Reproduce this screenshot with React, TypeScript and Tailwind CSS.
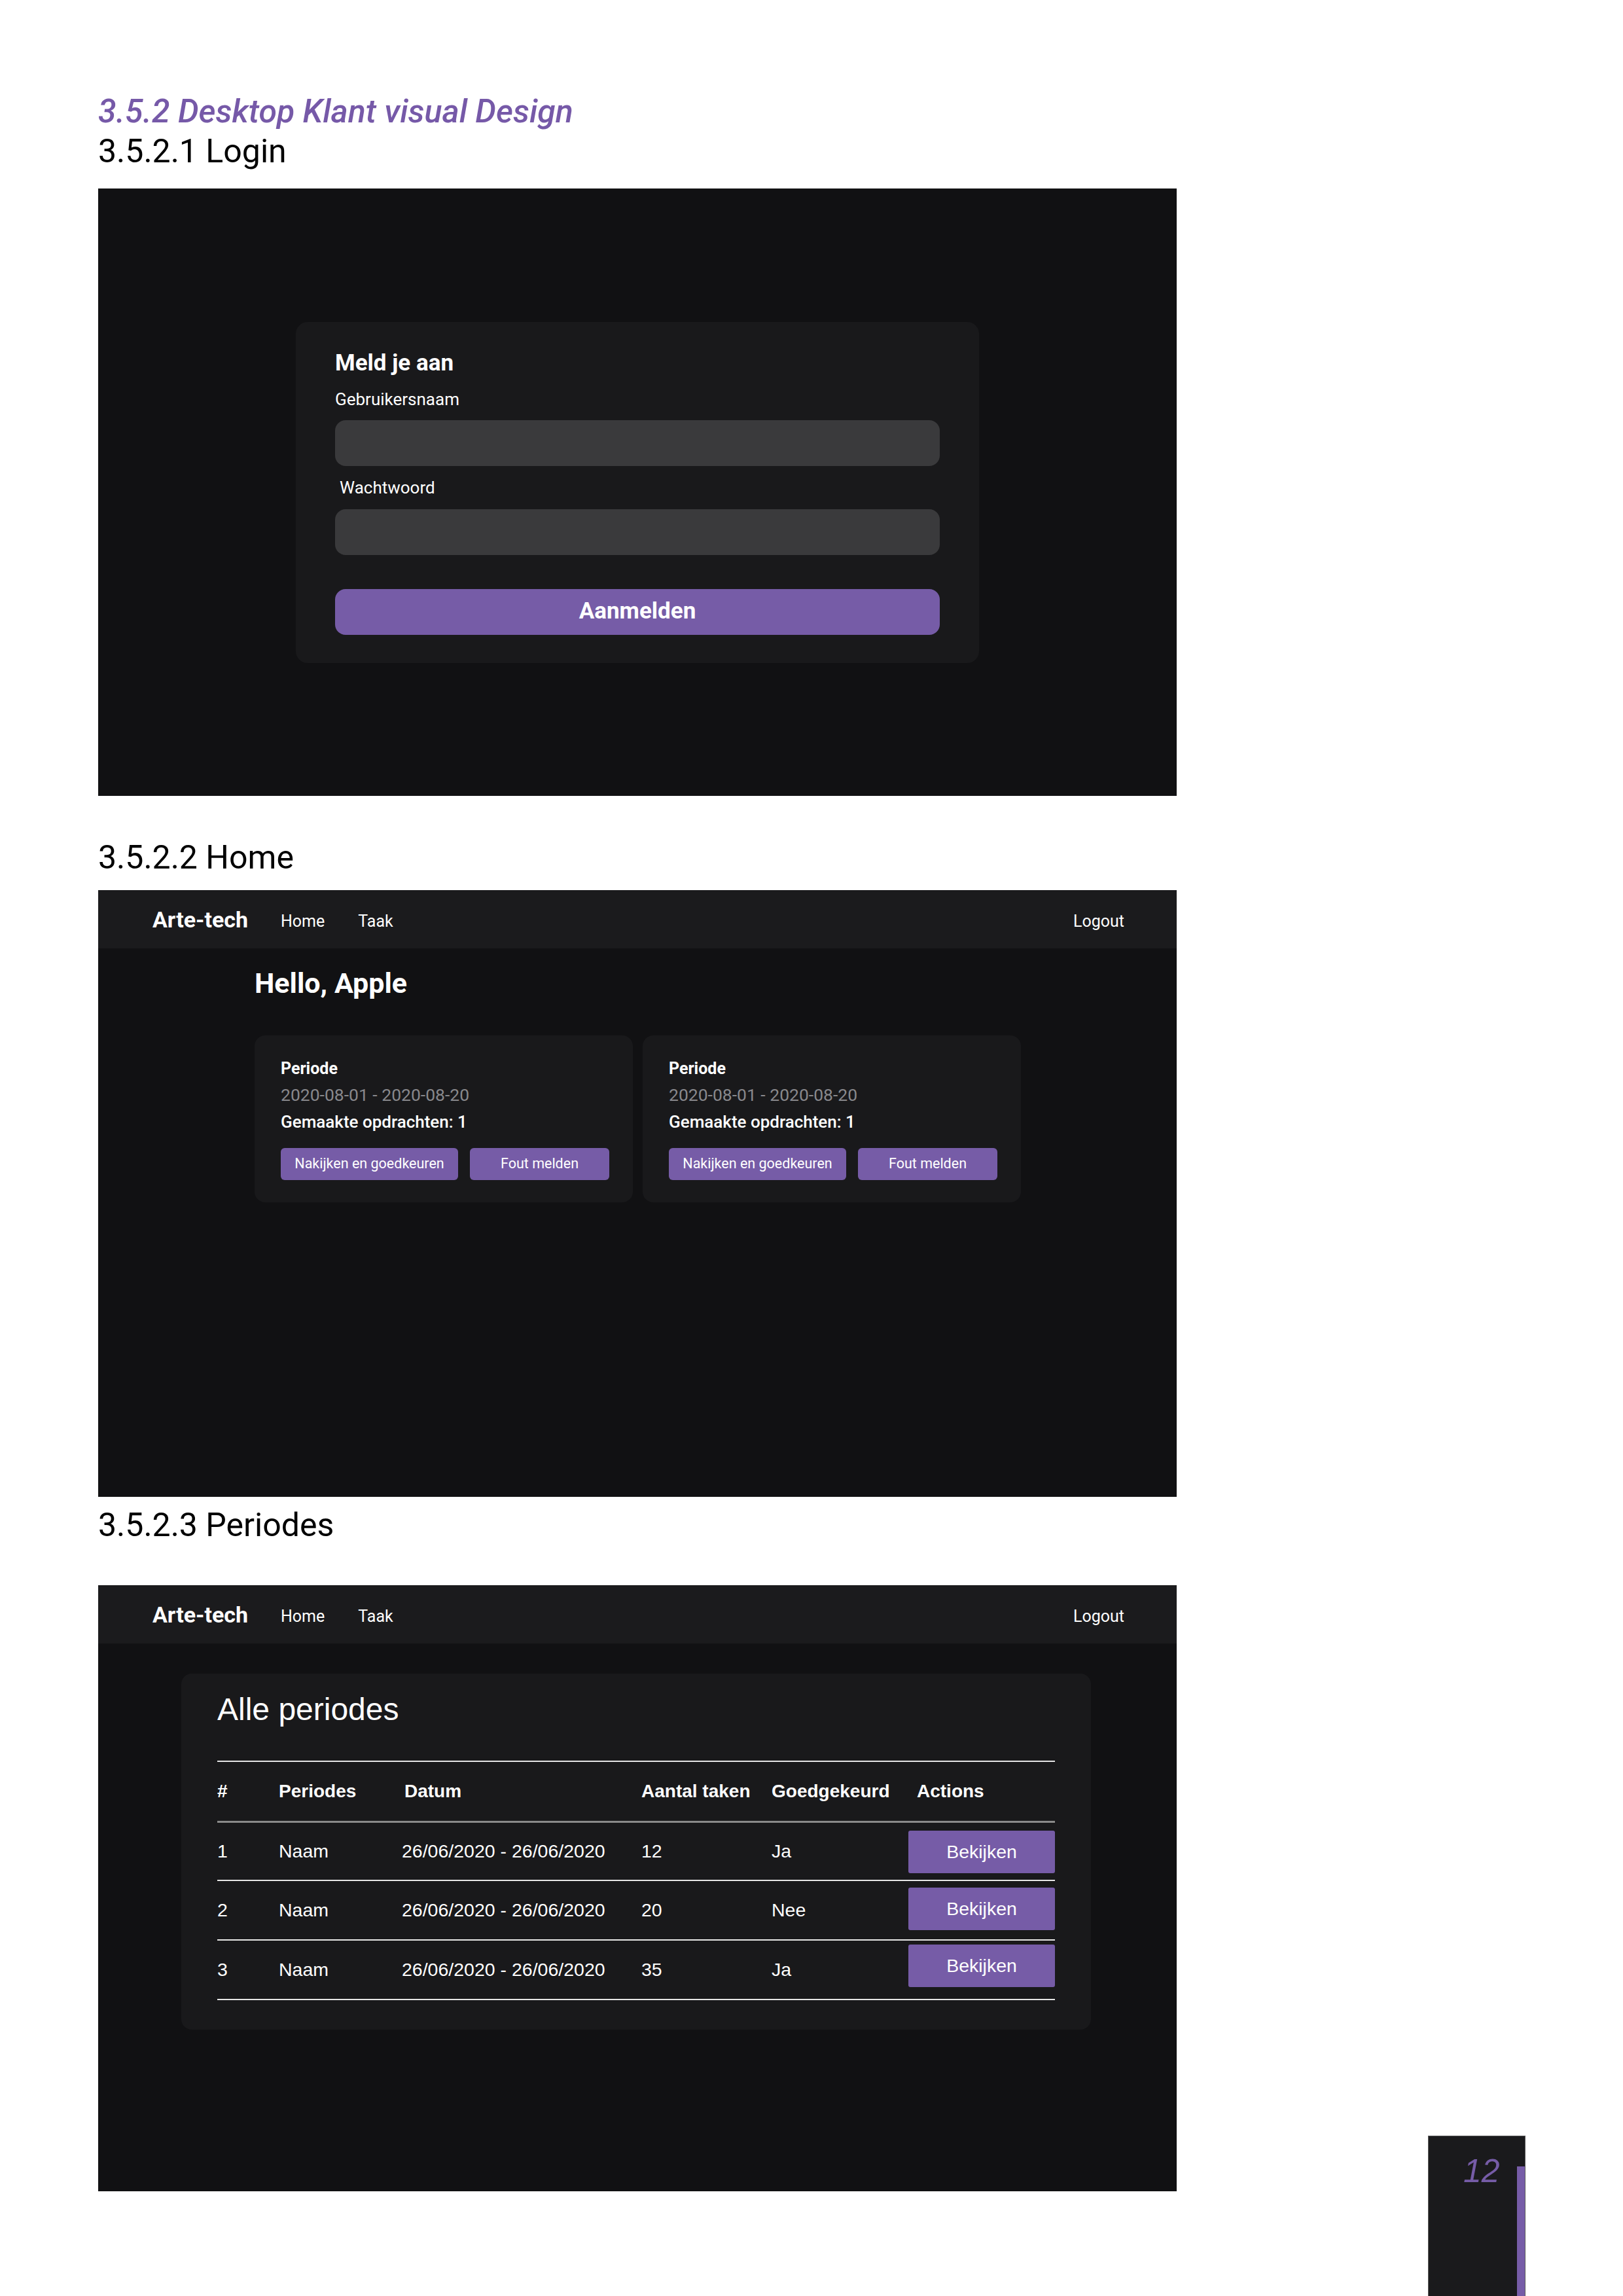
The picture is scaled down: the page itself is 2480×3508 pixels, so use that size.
import React from "react";

const PURPLE = "bg-[#765ca7]";

function NavBar() {
  return (
    <div className="h-[89px] bg-[#1b1b1d] flex items-center pl-[83px] pr-[80px] text-white">
      <span className="text-[34px] font-bold leading-none">Arte-tech</span>
      <span className="ml-[50px] text-[25px] leading-none mt-[5px]">Home</span>
      <span className="ml-[51px] text-[25px] leading-none mt-[5px]">Taak</span>
      <span className="ml-auto text-[25px] leading-none mt-[5px]">Logout</span>
    </div>
  );
}

function LoginFrame() {
  return (
    <div className="h-[928px] w-[1648px] bg-[#111113] flex items-center justify-center">
      <div className="w-[1044px] rounded-[18px] bg-[#19191b] px-[60px] pt-[45px] pb-[43px] flex flex-col text-white">
        <div className="text-[35px] font-bold leading-none">Meld je aan</div>
        <div className="mt-[25px] text-[26px] leading-none">Gebruikersnaam</div>
        <div className="mt-[19px] h-[70px] rounded-[16px] bg-[#3a3a3c]" />
        <div className="mt-[20px] text-[26px] leading-none pl-[7px]">Wachtwoord</div>
        <div className="mt-[20px] h-[70px] rounded-[16px] bg-[#3a3a3c]" />
        <div className={`mt-[52px] h-[70px] rounded-[16px] ${PURPLE} flex items-center justify-center text-[35px] font-bold`}>
          Aanmelden
        </div>
      </div>
    </div>
  );
}

function PeriodCard() {
  return (
    <div className="w-[578px] h-[255px] rounded-[16px] bg-[#19191b] pl-[40px] pt-[38px] text-white">
      <div className="text-[25px] font-bold leading-none">Periode</div>
      <div className="mt-[15px] text-[26.5px] leading-none text-[#88888c]">2020-08-01 - 2020-08-20</div>
      <div className="mt-[14px] text-[26px] font-medium leading-none">Gemaakte opdrachten: 1</div>
      <div className="mt-[27px] flex gap-[18px]">
        <div className={`w-[271px] h-[49px] rounded-[6px] ${PURPLE} flex items-center justify-center text-[21.5px]`}>
          Nakijken en goedkeuren
        </div>
        <div className={`w-[213px] h-[49px] rounded-[6px] ${PURPLE} flex items-center justify-center text-[21.5px]`}>
          Fout melden
        </div>
      </div>
    </div>
  );
}

function HomeFrame() {
  return (
    <div className="h-[927px] w-[1648px] bg-[#111113] flex flex-col">
      <NavBar />
      <div className="pl-[239px] pt-[32px] flex flex-col">
        <div className="text-white text-[43px] font-bold leading-none">Hello, Apple</div>
        <div className="mt-[58px] flex gap-[15px]">
          <PeriodCard />
          <PeriodCard />
        </div>
      </div>
    </div>
  );
}

const rows = [
  { n: "1", naam: "Naam", datum: "26/06/2020 - 26/06/2020", taken: "12", ok: "Ja", h: "h-[87px]", b: "mt-[12px]" },
  { n: "2", naam: "Naam", datum: "26/06/2020 - 26/06/2020", taken: "20", ok: "Nee", h: "h-[89px]", b: "mt-[10px]" },
  { n: "3", naam: "Naam", datum: "26/06/2020 - 26/06/2020", taken: "35", ok: "Ja", h: "h-[89px]", b: "mt-[6px]" },
];

const COLS = "grid grid-cols-[94px_192px_362px_199px_209px_224px] items-center";

function PeriodesFrame() {
  return (
    <div className="h-[926px] w-[1648px] bg-[#111113] flex flex-col">
      <NavBar />
      <div className="pt-[46px] flex justify-center pr-[4px]">
        <div className="w-[1390px] rounded-[16px] bg-[#19191b] px-[55px] pt-[31px] pb-[45px] text-white font-['Liberation_Sans',Arial,sans-serif]">
          <div className="text-[48px] leading-none">Alle periodes</div>
          <div className="mt-[54px] h-[2px] bg-[#e6e6e6]" />
          <div className={`${COLS} h-[90px] text-[28px] font-bold leading-none`}>
            <span>#</span>
            <span>Periodes</span>
            <span>Datum</span>
            <span>Aantal taken</span>
            <span>Goedgekeurd</span>
            <span className="pl-[13px]">Actions</span>
          </div>
          <div className="h-[3px] bg-[#8a8a8a]" />
          {rows.map((r) => (
            <React.Fragment key={r.n}>
              <div className={`${COLS} ${r.h} text-[28.5px] leading-none`}>
                <span>{r.n}</span>
                <span>{r.naam}</span>
                <span className="-ml-[4px]">{r.datum}</span>
                <span>{r.taken}</span>
                <span>{r.ok}</span>
                <div className={`self-start ${r.b} h-[65px] rounded-[3px] ${PURPLE} flex items-center justify-center`}>Bekijken</div>
              </div>
              <div className="h-[2px] bg-[#e6e6e6]" />
            </React.Fragment>
          ))}
        </div>
      </div>
    </div>
  );
}

export default function App() {
  return (
    <div className="relative w-[2480px] h-[3508px] bg-white overflow-hidden font-[Roboto,sans-serif]">
      <div className="pl-[150px] pt-[145px] flex flex-col items-start">
        <h1 className="text-[50px] leading-none italic font-medium text-[#7659a8]">3.5.2 Desktop Klant visual Design</h1>
        <h2 className="mt-[11px] text-[50px] leading-none text-black">3.5.2.1 Login</h2>
        <div className="mt-[32px]">
          <LoginFrame />
        </div>
        <h2 className="mt-[69px] text-[50px] leading-none text-black">3.5.2.2 Home</h2>
        <div className="mt-[25px]">
          <HomeFrame />
        </div>
        <h2 className="mt-[18px] text-[50px] leading-none text-black">3.5.2.3 Periodes</h2>
        <div className="mt-[67px]">
          <PeriodesFrame />
        </div>
      </div>
      <div className="absolute left-[2182px] top-[3263px] w-[149px] h-[260px] bg-[#1a1a1c] border border-[#5a5a5a]">
        <div className="absolute right-0 top-[46px] bottom-0 w-[12px] bg-[#765ca7]" />
        <div className="absolute left-[53px] top-[28px] text-[50px] leading-none italic text-[#765ca7] font-['Liberation_Sans',Arial,sans-serif]">
          12
        </div>
      </div>
    </div>
  );
}
